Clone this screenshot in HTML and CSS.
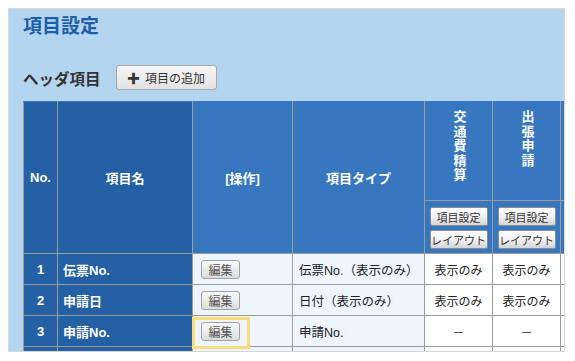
FILE: index.html
```html
<!DOCTYPE html>
<html lang="ja">
<head>
    <meta charset="UTF-8">
    <title>項目設定</title>
    <link rel="stylesheet" href="styles.css">
</head>
<body>
    <div class="panel">
        <h2 class="panel-title">項目設定</h2>

        <div class="section-head">
            <h3 class="section-title">ヘッダ項目</h3>
            <button class="btn add-button"><span class="plus">✚</span>項目の追加</button>
        </div>

        <table class="item-table">
            <colgroup>
                <col style="width:34px">
                <col style="width:135px">
                <col style="width:100px">
                <col style="width:132px">
                <col style="width:68px">
                <col style="width:68px">
                <col style="width:20px">
            </colgroup>
            <thead>
                <tr class="head-top">
                    <th rowspan="2" class="dark">No.</th>
                    <th rowspan="2" class="dark">項目名</th>
                    <th rowspan="2">[操作]</th>
                    <th rowspan="2">項目タイプ</th>
                    <th class="vert"><span>交通費精算</span></th>
                    <th class="vert"><span>出張申請</span></th>
                    <th></th>
                </tr>
                <tr class="head-sub">
                    <th><button class="btn small">項目設定</button><button class="btn small">レイアウト</button></th>
                    <th><button class="btn small">項目設定</button><button class="btn small">レイアウト</button></th>
                    <th></th>
                </tr>
            </thead>
            <tbody>
                <tr>
                    <td class="dark num">1</td>
                    <td class="dark name">伝票No.</td>
                    <td class="op"><button class="btn edit">編集</button></td>
                    <td class="type">伝票No.（表示のみ）</td>
                    <td class="val">表示のみ</td>
                    <td class="val">表示のみ</td>
                    <td class="val"></td>
                </tr>
                <tr>
                    <td class="dark num">2</td>
                    <td class="dark name">申請日</td>
                    <td class="op"><button class="btn edit">編集</button></td>
                    <td class="type">日付（表示のみ）</td>
                    <td class="val">表示のみ</td>
                    <td class="val">表示のみ</td>
                    <td class="val"></td>
                </tr>
                <tr>
                    <td class="dark num">3</td>
                    <td class="dark name">申請No.</td>
                    <td class="op"><button class="btn edit">編集</button><span class="mark"></span></td>
                    <td class="type">申請No.</td>
                    <td class="val">－</td>
                    <td class="val">－</td>
                    <td class="val"></td>
                </tr>
                <tr>
                    <td class="dark num"></td>
                    <td class="dark name"></td>
                    <td class="op"></td>
                    <td class="type"></td>
                    <td class="val"></td>
                    <td class="val"></td>
                    <td class="val"></td>
                </tr>
            </tbody>
        </table>
    </div>
</body>
</html>
```

FILE: styles.css
```css
body {
    margin: 8px;
    background: #fff;
    font-family: "Liberation Sans", "Noto Sans CJK JP", sans-serif;
    color: #333;
}

.panel {
    width: 541px;
    height: 336px;
    padding: 6px 0 0 14px;
    background: #b4d5ef;
    border: 1px solid #d6d6d6;
    overflow: hidden;
}

.panel-title {
    margin: 0;
    font-size: 19px;
    line-height: 24px;
    color: #1d5ea8;
}

.section-head {
    display: flex;
    align-items: center;
    gap: 15px;
    margin-top: 26px;
    height: 25px;
}

.section-title {
    margin: 0;
    font-size: 15.5px;
    color: #333;
}

.btn {
    font-family: "Liberation Sans", "Noto Sans CJK JP", sans-serif;
    color: #333;
    background: linear-gradient(#fafafa, #dcdcdc);
    border: 1px solid #999;
    border-radius: 3px;
    padding: 0;
    cursor: pointer;
}

.add-button {
    width: 101px;
    height: 25px;
    font-size: 12px;
    background: linear-gradient(#f7f7f7, #e2e2e2);
    border-color: #a8a8a8;
}

.plus {
    font-size: 13px;
    font-weight: bold;
    margin-right: 5px;
}

.item-table {
    margin-top: 11px;
    table-layout: fixed;
    width: 557px;
    border-collapse: collapse;
    font-size: 12px;
}

.item-table th,
.item-table td {
    border: 1px solid #9c9c9c;
    padding: 0;
}

.item-table th {
    background: #3777bf;
    color: #fff;
    font-size: 13px;
}

.item-table .dark {
    background: #2560a4;
    color: #fff;
    font-weight: bold;
}

.head-top {
    height: 99px;
}

.head-top th {
    border-top-color: #3a7cc4;
}

.vert {
    vertical-align: top;
    padding-top: 8px !important;
}

.vert span {
    writing-mode: vertical-rl;
    text-orientation: upright;
    letter-spacing: 1.5px;
    line-height: 14px;
}

.head-sub {
    height: 53px;
}

.head-sub th {
    padding-top: 2px !important;
}

.small {
    display: block;
    width: 58px;
    height: 19px;
    margin: 0 auto 4px;
    font-size: 11px;
    border-color: #8c8c8c;
    border-radius: 2px;
    background: linear-gradient(#fff 0%, #f2f2f2 50%, #d4d4d4 100%);
}

.small:last-child {
    margin-bottom: 0;
}

tbody tr {
    height: 31px;
}

.num {
    text-align: center;
    font-size: 13px;
}

.name {
    padding-left: 5px !important;
    font-size: 13px;
}

.op {
    background: #eef5fe;
    padding-left: 8px !important;
    position: relative;
}

.edit {
    width: 39px;
    height: 19px;
    font-size: 12px;
    color: #555;
    border-color: #a0a0a0;
}

.mark {
    position: absolute;
    left: -1px;
    top: 1px;
    width: 52px;
    height: 26px;
    border: 3px solid #f9dc7c;
    z-index: 1;
}

.type {
    background: #eef5fe;
    padding-left: 6px !important;
    font-size: 12.5px;
    color: #222;
}

.val {
    background: #fff;
    text-align: center;
    color: #222;
}
```
